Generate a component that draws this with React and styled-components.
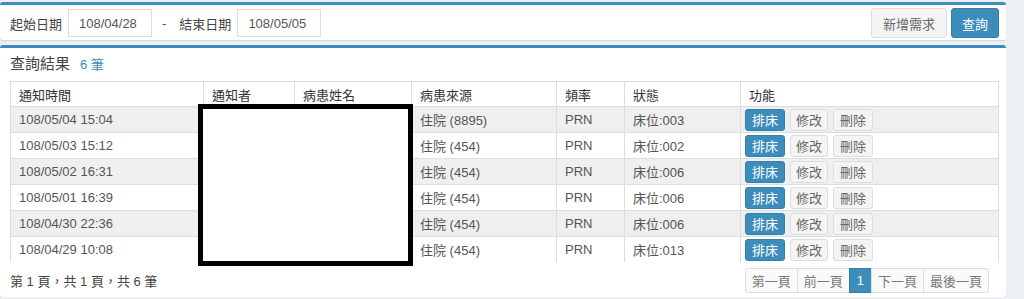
import React from 'react';
import styled, { createGlobalStyle } from 'styled-components';

// STYLES

const GlobalStyle = createGlobalStyle`
  body {
    margin: 0;
    background: #ecf0f5;
    font-family: 'Liberation Sans', 'Noto Sans CJK TC', sans-serif;
    color: #333;
  }
`;

const Page = styled.div`
  width: 1006px;
  padding-top: 2px;
  display: flex;
  flex-direction: column;
  gap: 5px;
`;

const Box = styled.div`
  position: relative;
  background: #fff;
  border-top: 3px solid #3c8dbc;
  border-radius: 3px;
  box-shadow: 0 1px 1px rgba(0, 0, 0, 0.1);
`;

const Toolbar = styled.div`
  display: flex;
  align-items: center;
  height: 30px;
  padding: 3px 7px 2px 10px;
`;

const Label = styled.span`
  font-size: 13px;
  color: #444;
  margin-right: 6px;
`;

const DateInput = styled.div`
  box-sizing: border-box;
  width: 84px;
  height: 28px;
  border: 1px solid #ddd;
  display: flex;
  align-items: center;
  padding-left: 10px;
  font-size: 13px;
  color: #555;
`;

const Dash = styled.span`
  font-size: 13px;
  margin: 0 13px 0 10px;
  color: #555;
`;

const Spacer = styled.div`
  flex: 1;
`;

const Button = styled.button`
  box-sizing: border-box;
  height: ${p => p.$h || 30}px;
  padding: 0 ${p => p.$px || 10}px;
  font-family: inherit;
  font-size: 13px;
  border-radius: 3px;
  border: 1px solid ${p => (p.$primary ? '#367fa9' : '#ddd')};
  background: ${p => (p.$primary ? '#3c8dbc' : '#f4f4f4')};
  color: ${p => (p.$primary ? '#fff' : '#666')};
  cursor: pointer;
`;

const ButtonRow = styled.div`
  display: flex;
  gap: ${p => p.$gap || 5}px;
`;

const Body = styled.div`
  padding: 4px 8px 4px 10px;
`;

const Title = styled.div`
  display: flex;
  align-items: baseline;
  height: 22px;
  margin-bottom: 7px;
  font-size: 15px;
  color: #444;
`;

const Count = styled.span`
  font-size: 13px;
  color: #3c8dbc;
  margin-left: 10px;
`;

const TableWrap = styled.div`
  position: relative;
`;

const Table = styled.table`
  width: 988px;
  border-collapse: collapse;
  table-layout: fixed;
  font-size: 13px;
  border: 1px solid #ddd;
  border-bottom: none;
`;

const Th = styled.th`
  text-align: left;
  font-weight: normal;
  color: #333;
  height: 24px;
  padding: 0 8px;
  border: 1px solid #ddd;
  border-top: none;
`;

const Tr = styled.tr`
  background: ${p => (p.$striped ? '#efefef' : '#fff')};
`;

const Td = styled.td`
  height: 25px;
  padding: 0 8px;
  color: #555;
  border-left: 1px solid #ddd;
  border-right: 1px solid #ddd;
  border-bottom: ${p => (p.$last ? 'none' : '1px solid #ddd')};
  white-space: nowrap;
`;

const ActionCell = styled(Td)`
  padding: 0 4px;
`;

const Redaction = styled.div`
  position: absolute;
  left: 188px;
  top: 23px;
  width: 215px;
  height: 162px;
  box-sizing: border-box;
  border: 5px solid #000;
  background: #fff;
`;

const Footer = styled.div`
  display: flex;
  align-items: center;
  justify-content: space-between;
  margin-top: 6px;
  padding-right: 9px;
`;

const PageInfo = styled.span`
  font-size: 13px;
  color: #444;
`;

const Pager = styled.div`
  display: flex;
  height: 25px;
`;

const PageItem = styled.div`
  display: flex;
  align-items: center;
  padding: 0 ${p => (p.$active ? 7 : 6)}px;
  font-size: 13px;
  border: 1px solid ${p => (p.$active ? '#367fa9' : '#ddd')};
  margin-left: -1px;
  background: ${p => (p.$active ? '#3c8dbc' : '#fafafa')};
  color: ${p => (p.$active ? '#fff' : '#777')};
  &:first-child {
    border-radius: 3px 0 0 3px;
  }
  &:last-child {
    border-radius: 0 3px 3px 0;
  }
`;

const columns = [
  ['通知時間', 193],
  ['通知者', 91],
  ['病患姓名', 117],
  ['病患來源', 145],
  ['頻率', 68],
  ['狀態', 116],
  ['功能', 258],
];

const rows = [
  ['108/05/04 15:04', '住院 (8895)', '床位:003'],
  ['108/05/03 15:12', '住院 (454)', '床位:002'],
  ['108/05/02 16:31', '住院 (454)', '床位:006'],
  ['108/05/01 16:39', '住院 (454)', '床位:006'],
  ['108/04/30 22:36', '住院 (454)', '床位:006'],
  ['108/04/29 10:08', '住院 (454)', '床位:013'],
];

export default function App() {
  return (
    <>
      <GlobalStyle />
      <Page>
        <Box>
          <Toolbar>
            <Label>起始日期</Label>
            <DateInput>108/04/28</DateInput>
            <Dash>-</Dash>
            <Label>結束日期</Label>
            <DateInput>108/05/05</DateInput>
            <Spacer />
            <ButtonRow $gap={4}>
              <Button $px={11}>新增需求</Button>
              <Button $primary $px={10}>查詢</Button>
            </ButtonRow>
          </Toolbar>
        </Box>

        <Box>
          <Body>
            <Title>
              查詢結果<Count>6 筆</Count>
            </Title>
            <TableWrap>
              <Table>
                <colgroup>
                  {columns.map(([name, w]) => (
                    <col key={name} style={{ width: w }} />
                  ))}
                </colgroup>
                <thead>
                  <tr>
                    {columns.map(([name]) => (
                      <Th key={name}>{name}</Th>
                    ))}
                  </tr>
                </thead>
                <tbody>
                  {rows.map((r, i) => {
                    const last = i === rows.length - 1;
                    return (
                      <Tr key={r[0]} $striped={i % 2 === 0}>
                        <Td $last={last}>{r[0]}</Td>
                        <Td $last={last} />
                        <Td $last={last} />
                        <Td $last={last}>{r[1]}</Td>
                        <Td $last={last}>PRN</Td>
                        <Td $last={last}>{r[2]}</Td>
                        <ActionCell $last={last}>
                          <ButtonRow>
                            <Button $primary $h={22} $px={6}>排床</Button>
                            <Button $h={22} $px={5}>修改</Button>
                            <Button $h={22} $px={6}>刪除</Button>
                          </ButtonRow>
                        </ActionCell>
                      </Tr>
                    );
                  })}
                </tbody>
              </Table>
              <Redaction />
            </TableWrap>
            <Footer>
              <PageInfo>第 1 頁，共 1 頁，共 6 筆</PageInfo>
              <Pager>
                <PageItem>第一頁</PageItem>
                <PageItem>前一頁</PageItem>
                <PageItem $active>1</PageItem>
                <PageItem>下一頁</PageItem>
                <PageItem>最後一頁</PageItem>
              </Pager>
            </Footer>
          </Body>
        </Box>
      </Page>
    </>
  );
}
